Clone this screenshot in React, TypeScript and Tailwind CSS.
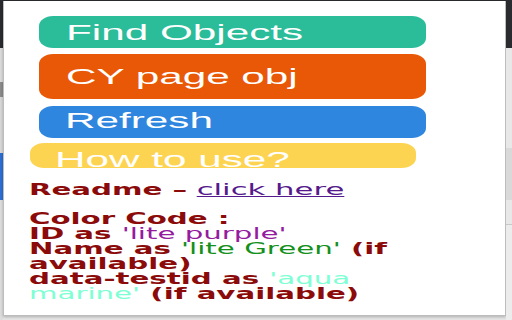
import React from 'react';

const buttons = [
  { label: 'Find Objects', bg: 'bg-[#2bbc9a]', box: 'ml-[35px] w-[387px] h-[32px] pt-[1px] pl-[27px]' },
  { label: 'CY page obj', bg: 'bg-[#e95806]', box: 'ml-[35px] w-[387px] h-[45px] mt-[6px] pl-[27px]' },
  { label: 'Refresh', bg: 'bg-[#2f86de]', box: 'ml-[35px] w-[387px] h-[32px] mt-[7px] pb-[2px] pl-[26px]' },
  { label: 'How to use?', bg: 'bg-[#fdd452]', box: 'ml-[26px] w-[386px] h-[25px] mt-[5px] pt-[8px] pl-[25px]' },
];

export default function App() {
  return (
    <div className="flex h-[320px] w-[512px] overflow-hidden bg-[#e6e6e6]">
      {/* browser behind the popup, left edge */}
      <div className="flex w-[3px] flex-col">
        <div className="h-[48px] bg-[#2a2b2f]" />
        <div className="h-[34px] bg-[#dcdcdc]" />
        <div className="h-[15px] bg-[#8c8c8c]" />
        <div className="h-[56px] bg-[#d9d9d9]" />
        <div className="h-[47px] bg-[#2b6fd6]" />
        <div className="flex-1 bg-[#dedede]" />
      </div>

      <div className="flex w-[503px] flex-col">
        <div className="h-[1px] bg-[#2a2b2f]" />
        <div className="h-[315px] overflow-hidden border border-t-0 border-[#bdbdbd] bg-white pt-[15px] shadow-[0_1px_3px_rgba(0,0,0,0.25)]">
          {buttons.map(b => (
            <div key={b.label} className={`flex items-center overflow-hidden rounded-[14px/10px] ${b.bg} ${b.box}`}>
              <span className="inline-block origin-left scale-x-[1.92] whitespace-nowrap font-['Liberation_Sans',Arial,sans-serif] text-[22px] leading-[24px] text-white">
                {b.label}
              </span>
            </div>
          ))}

          <div className="mt-[15px] ml-[25px] origin-left scale-x-[1.95] whitespace-nowrap font-['DejaVu_Sans',Verdana,sans-serif] text-[15px] leading-[15px] font-bold text-[#8b0a0a]">
            <div>
              Readme –{' '}
              <a href="#" className="inline-block origin-left scale-x-[1.05] font-normal text-[#551a8b] underline">
                click here
              </a>
            </div>
            <div className="mt-[14px]">
              Color Code :<br />
              ID as <span className="font-normal text-[#951c9e]">'lite purple'</span>
              <br />
              Name as <span className="font-normal text-[#14901c]">'lite Green'</span> (if
              <br />
              available)
              <br />
              data-testid as <span className="font-normal text-[#7fffd4]">'aqua</span>
              <br />
              <span className="font-normal text-[#7fffd4]">marine'</span> (if available)
            </div>
          </div>
        </div>
      </div>

      {/* browser behind the popup, right edge */}
      <div className="flex flex-1 flex-col">
        <div className="h-[48px] bg-[#2a2b2f]" />
        <div className="h-[100px] bg-[#e8e8e8]" />
        <div className="h-[52px] bg-[#d9d9d9]" />
        <div className="h-[24px] bg-[#e8e8e8]" />
        <div className="h-[1px] bg-[#c8c8c8]" />
        <div className="flex-1 bg-[#ececec]" />
      </div>
    </div>
  );
}
